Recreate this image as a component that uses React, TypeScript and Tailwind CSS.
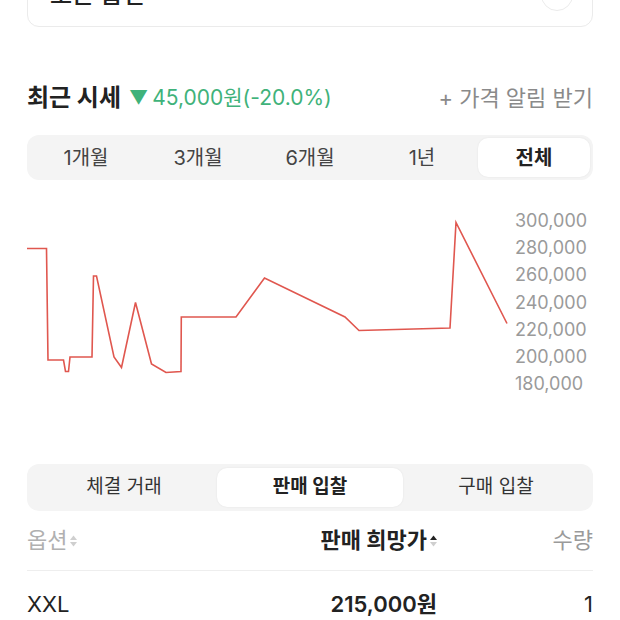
const periods = ["1개월", "3개월", "6개월", "1년", "전체"];
const tradeTabs = ["체결 거래", "판매 입찰", "구매 입찰"];
const yLabels = ["300,000", "280,000", "260,000", "240,000", "220,000", "200,000", "180,000"];

// chart points in page coords, chart box starts at x=27, y=200
const points: [number, number][] = [
  [27, 247.5], [46.5, 247.5], [48, 359], [63.5, 359], [65.5, 370.5], [68.5, 370.5],
  [70, 356], [92, 356], [93.5, 275], [96.5, 275], [114, 356], [121.5, 366.5],
  [135.5, 301.5], [151.5, 363], [166, 371.5], [181, 370.5], [181.3, 316], [236, 316],
  [264.5, 277], [345, 316], [359, 329.5], [450, 327], [456, 221.5], [507, 322.5],
];

function SortArrows({ active }: { active?: boolean }) {
  return (
    <svg width="9" height="16" viewBox="0 0 9 16" className="ml-[2px]">
      <path d="M4.5 2.5 L8 7 L1 7 Z" fill={active ? "#222222" : "#cfcfcf"} />
      <path d="M4.5 13.5 L8 9 L1 9 Z" fill="#cfcfcf" />
    </svg>
  );
}

export default function App() {
  const path = points
    .map(([x, y], i) => `${i === 0 ? "M" : "L"}${(x - 27).toFixed(1)} ${(y - 200).toFixed(1)}`)
    .join(" ");

  return (
    <div
      className="w-[620px] h-[620px] overflow-hidden bg-white px-[27px] text-[#222222]"
      style={{ fontFamily: 'Inter, "Noto Sans CJK KR", sans-serif' }}
    >
      {/* option card (scrolled) */}
      <div className="mt-[-37px] h-[64px] rounded-[12px] border border-[#ebebeb] flex items-center justify-between pl-[22px] pr-[19px]">
        <span className="text-[24px] font-medium">모든 옵션</span>
        <div className="w-[32px] h-[32px] rounded-full border border-[#ebebeb] flex items-center justify-center">
          <svg width="12" height="12" viewBox="0 0 12 12">
            <path d="M2 4 L6 8 L10 4" stroke="#444" strokeWidth="1.4" fill="none" />
          </svg>
        </div>
      </div>

      {/* recent price header */}
      <div className="mt-[56px] flex items-center justify-between h-[30px]">
        <div className="flex items-center">
          <span className="text-[24px] font-bold">최근 시세</span>
          <span className="ml-[8px] text-[19px] text-[#3fb27a]">▼</span>
          <span className="ml-[4px] text-[21px] text-[#3fb27a]">45,000원(-20.0%)</span>
        </div>
        <span className="text-[22px] text-[#8a8a8a]">+ 가격 알림 받기</span>
      </div>

      {/* period segmented control */}
      <div className="mt-[22px] h-[45px] rounded-[12px] bg-[#f4f4f4] p-[3px] grid grid-cols-5">
        {periods.map((p) => (
          <div
            key={p}
            className={`flex items-center justify-center rounded-[10px] text-[20px] ${
              p === "전체" ? "bg-white font-bold text-[#222222] shadow-[0_0_2px_rgba(0,0,0,0.08)]" : "text-[#444444]"
            }`}
          >
            {p}
          </div>
        ))}
      </div>

      {/* chart */}
      <div className="mt-[21px] h-[200px] flex">
        <svg width="488" height="200" viewBox="0 0 488 200" className="shrink-0">
          <path d={path} stroke="#e0574f" strokeWidth="1.6" fill="none" strokeLinejoin="miter" />
        </svg>
        <div className="pt-[6px] flex flex-col text-[18px] leading-[27.2px] text-[#9a9a9a]">
          {yLabels.map((l) => (
            <span key={l}>{l}</span>
          ))}
        </div>
      </div>

      {/* trade tabs */}
      <div className="mt-[63px] h-[47px] rounded-[12px] bg-[#f4f4f4] p-[4px] grid grid-cols-3">
        {tradeTabs.map((t) => (
          <div
            key={t}
            className={`flex items-center justify-center rounded-[10px] text-[19px] ${
              t === "판매 입찰" ? "bg-white font-bold text-[#222222] shadow-[0_0_2px_rgba(0,0,0,0.08)]" : "text-[#333333]"
            }`}
          >
            {t}
          </div>
        ))}
      </div>

      {/* table header */}
      <div className="h-[60px] flex items-center border-b border-[#eeeeee] text-[22px]">
        <div className="flex-1 flex items-center text-[#b0b0b0]">
          옵션
          <SortArrows />
        </div>
        <div className="flex items-center justify-end font-bold text-[#222222]">
          판매 희망가
          <SortArrows active />
        </div>
        <div className="w-[155px] text-right text-[#9a9a9a]">수량</div>
      </div>

      {/* row */}
      <div className="h-[66px] flex items-center text-[22px]">
        <div className="flex-1 text-[#222222]">XXL</div>
        <div className="font-semibold text-[#222222] pr-[1px]">215,000원</div>
        <div className="w-[155px] text-right">1</div>
      </div>
    </div>
  );
}
